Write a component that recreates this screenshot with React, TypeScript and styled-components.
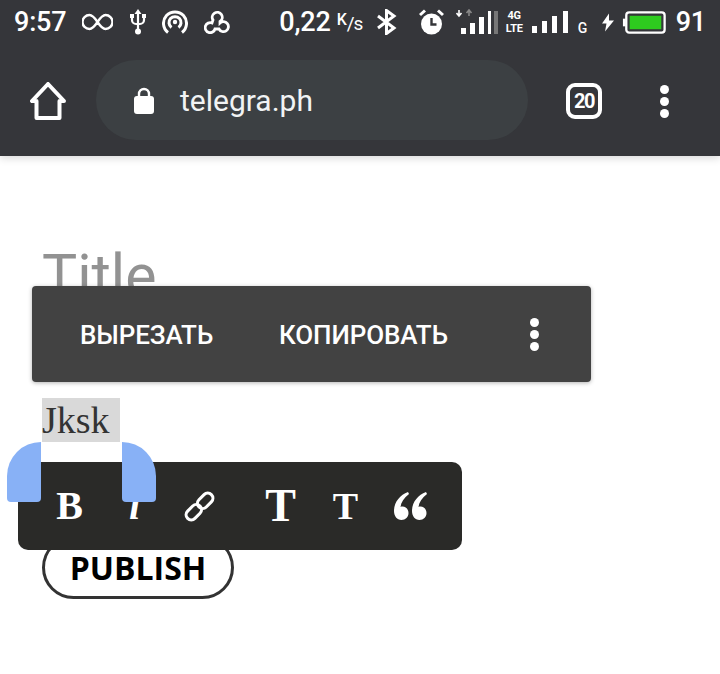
import { FC } from "react";
import styled, { createGlobalStyle } from "styled-components";

const GlobalStyle = createGlobalStyle`
  html, body {
    margin: 0;
    padding: 0;
    background: #fff;
  }
`;

const Page = styled.div`
  position: relative;
  width: 720px;
  height: 674px;
  overflow: hidden;
  background: #fff;
`;

const Header = styled.header`
  background: #35363a;
  box-shadow: 0 2px 8px rgba(0, 0, 0, 0.16);
  position: relative;
`;

const StatusBar = styled.div`
  height: 48px;
  box-sizing: border-box;
  padding: 0 0 4px 14px;
  display: flex;
  align-items: center;
  color: #fff;
  font-family: Roboto, sans-serif;
`;

const StatusText = styled.span<{ $left?: number }>`
  font-size: 27px;
  font-weight: 500;
  line-height: 44px;
  margin-left: ${(p) => p.$left ?? 0}px;
  letter-spacing: -0.2px;
`;

const Speed = styled.span`
  font-size: 16px;
  font-weight: 500;
  margin-left: 6px;
  width: 25px;
  position: relative;
  top: -4px;
  white-space: nowrap;
`;

const SpeedUnit = styled.span`
  font-size: 19px;
  font-weight: 400;
  position: relative;
  top: 5px;
  letter-spacing: -1px;
`;

const StatusIcon = styled.svg<{ $left?: number }>`
  display: block;
  flex: none;
  margin-left: ${(p) => p.$left ?? 0}px;
`;

const NetLabel = styled.span`
  display: flex;
  flex-direction: column;
  align-items: center;
  margin-left: 9px;
  width: 15px;
  font-size: 11px;
  line-height: 13px;
  font-weight: 700;
  letter-spacing: -0.3px;
`;

const SmallG = styled.span`
  font-size: 14px;
  font-weight: 500;
  width: 9px;
  margin-left: 10px;
  position: relative;
  top: 6px;
`;

const Toolbar = styled.div`
  height: 108px;
  display: flex;
  align-items: flex-start;
  padding-left: 30px;
`;

const HomeSlot = styled.div`
  margin-top: 34px;
`;

const AddressPill = styled.div`
  width: 432px;
  height: 80px;
  margin: 12px 0 0 30px;
  padding-left: 38px;
  box-sizing: border-box;
  border-radius: 40px;
  background: #3c4043;
  display: flex;
  align-items: center;
  gap: 26px;
`;

const Url = styled.span`
  font-family: Roboto, sans-serif;
  font-size: 30px;
  color: #f1f3f4;
`;

const TabCount = styled.div`
  width: 36px;
  height: 36px;
  margin: 35px 0 0 38px;
  box-sizing: border-box;
  border: 4px solid #fff;
  border-radius: 9px;
  display: flex;
  align-items: center;
  justify-content: center;
  color: #fff;
  font-family: Roboto, sans-serif;
  font-size: 20px;
  font-weight: 700;
  letter-spacing: -1.500px;
`;

const MenuDots = styled.div<{ $size: number; $gap: number; $left?: number; $top?: number }>`
  display: flex;
  flex-direction: column;
  gap: ${(p) => p.$gap}px;
  margin-left: ${(p) => p.$left ?? 0}px;
  margin-top: ${(p) => p.$top ?? 0}px;
  i {
    display: block;
    width: ${(p) => p.$size}px;
    height: ${(p) => p.$size}px;
    border-radius: 50%;
    background: #fff;
  }
`;

const Content = styled.main`
  padding: 84px 0 0 42px;
`;

const Title = styled.h1`
  margin: 0;
  height: 158px;
  font-family: Roboto, sans-serif;
  font-weight: 400;
  font-size: 59px;
  line-height: 72px;
  color: #929292;
`;

const Paragraph = styled.p`
  margin: 0;
  height: 138px;
`;

const Selected = styled.span`
  display: inline-block;
  height: 44px;
  width: 78px;
  background: #d9d9d9;
  color: #333;
  font-family: "Liberation Serif", serif;
  font-size: 38px;
  line-height: 44px;
`;

const PublishButton = styled.button`
  display: block;
  width: 192px;
  height: 63px;
  padding: 0;
  box-sizing: border-box;
  background: #fff;
  border: 3px solid #333;
  border-radius: 32px;
  color: #000;
  font-family: "Open Sans", sans-serif;
  font-size: 32px;
  font-weight: 700;
  line-height: 56px;
`;

const ContextMenu = styled.div`
  position: absolute;
  left: 32px;
  top: 286px;
  width: 559px;
  height: 96px;
  box-sizing: border-box;
  padding-left: 48px;
  display: flex;
  align-items: center;
  background: #424242;
  border-radius: 4px;
  box-shadow: 0 1px 4px rgba(0, 0, 0, 0.3);
`;

const MenuItem = styled.span<{ $width: number }>`
  width: ${(p) => p.$width}px;
  padding-top: 2px;
  color: #fff;
  font-family: Roboto, sans-serif;
  font-size: 26px;
  font-weight: 500;
  letter-spacing: -0.1px;
  white-space: nowrap;
`;

const FormatBar = styled.div`
  position: absolute;
  left: 18px;
  top: 462px;
  width: 444px;
  height: 88px;
  box-sizing: border-box;
  padding-left: 19px;
  display: flex;
  align-items: center;
  background: #2a2a28;
  border-radius: 10px;
`;

const FormatButton = styled.span<{ $size: number; $left?: number; $italic?: boolean }>`
  width: 65px;
  height: 88px;
  margin-left: ${(p) => p.$left ?? 0}px;
  flex: none;
  display: flex;
  align-items: center;
  justify-content: center;
  color: #fff;
  font-family: "Liberation Serif", serif;
  font-weight: 700;
  font-style: ${(p) => (p.$italic ? "italic" : "normal")};
  font-size: ${(p) => p.$size}px;
  line-height: 88px;
`;

const Handle = styled.div<{ $side: "left" | "right" }>`
  position: absolute;
  top: 442px;
  left: ${(p) => (p.$side === "left" ? 7 : 122)}px;
  width: 34px;
  height: 60px;
  background: #88b1f6;
  border-radius: ${(p) => (p.$side === "left" ? "34px 0 4px 4px" : "0 34px 4px 4px")};
`;

const StatusIcons: FC = () => (
  <StatusBar>
    <StatusText>9:57</StatusText>
    <StatusIcon $left={16} width="31" height="18" viewBox="0 0 31 18" fill="none" stroke="#fff" strokeWidth="2.400">
      <path d="M15.500 9C12.500 4.500 10.500 2 7.500 2a7 7 0 0 0 0 14c3 0 5-2.500 8-7s5-7 8-7a7 7 0 0 1 0 14c-3 0-5-2.500-8-7z" />
    </StatusIcon>
    <StatusIcon $left={17} width="16" height="26" viewBox="0 0 16 26" fill="none" stroke="#fff" strokeWidth="2.200">
      <path d="M2 7v4a4 4 0 0 0 4 4h4a4 4 0 0 0 4-4V7" />
      <path d="M8 4v18" />
      <path d="M8 0l3.500 5h-7z" fill="#fff" stroke="none" />
      <circle cx="8" cy="22.500" r="3" fill="#fff" stroke="none" />
      <rect x="0" y="5" width="4" height="4" fill="#fff" stroke="none" />
      <rect x="12" y="5" width="4" height="4" fill="#fff" stroke="none" />
    </StatusIcon>
    <StatusIcon $left={16} width="26" height="26" viewBox="0 0 26 26" fill="none" stroke="#fff" strokeWidth="3">
      <path d="M6 23.500a11.500 11.500 0 1 1 14 0" />
      <path d="M9.500 18.500a6 6 0 1 1 7 0" />
      <circle cx="13" cy="13" r="2.200" fill="#fff" stroke="none" />
    </StatusIcon>
    <StatusIcon $left={16} width="26" height="24" viewBox="0 0 26 24" fill="none" stroke="#fff" strokeWidth="2.800">
      <path d="M16 11.500A5 5 0 1 0 9 10L8 13A5 5 0 1 0 11 19H15A5 5 0 1 0 16 13Z" />
    </StatusIcon>
    <StatusText $left={49}>0,22</StatusText>
    <Speed>
      K<SpeedUnit>/s</SpeedUnit>
    </Speed>
    <StatusIcon $left={14} width="21" height="26" viewBox="0 0 21 26" fill="none" stroke="#fff" strokeWidth="3">
      <path d="M2 7l16 12-7.500 5.500V1.500L18 7 2 19" />
    </StatusIcon>
    <StatusIcon $left={22} width="25" height="26" viewBox="0 0 25 26">
      <path d="M1 6l5-4.500M24 6l-5-4.500" stroke="#fff" strokeWidth="3" />
      <circle cx="12.500" cy="15" r="10.500" fill="#fff" />
      <path d="M12.500 9v6.500h5" stroke="#35363a" strokeWidth="2.400" fill="none" />
    </StatusIcon>
    <StatusIcon $left={12} width="42" height="26" viewBox="0 0 42 26">
      <path d="M3 1v5M0.500 4L3 7l2.500-3" stroke="#fff" strokeWidth="1.600" fill="none" />
      <path d="M13 7V2M10.500 4L13 1l2.500 3" stroke="#888" strokeWidth="1.600" fill="none" />
      <rect x="5" y="19" width="5" height="6" fill="#fff" />
      <rect x="14" y="14" width="5" height="11" fill="#fff" />
      <rect x="23" y="8" width="5" height="17" fill="#fff" />
      <rect x="32" y="2" width="3" height="23" fill="#fff" />
      <rect x="38" y="2" width="4" height="23" fill="#777" />
    </StatusIcon>
    <NetLabel>
      <span>4G</span>
      <span>LTE</span>
    </NetLabel>
    <StatusIcon $left={10} width="36" height="22" viewBox="0 0 36 22" fill="#fff">
      <rect x="0" y="15" width="5" height="7" />
      <rect x="10" y="10" width="5" height="12" />
      <rect x="20" y="5" width="5" height="17" />
      <rect x="31" y="0" width="5" height="22" />
    </StatusIcon>
    <SmallG>G</SmallG>
    <StatusIcon $left={15} width="12" height="19" viewBox="0 0 12 18" fill="#fff">
      <path d="M7 0L0 10h4.500L3 18l9-11H7z" />
    </StatusIcon>
    <StatusIcon $left={8} width="45" height="23" viewBox="0 0 45 24">
      <rect x="0" y="8" width="3" height="8" fill="#fff" />
      <rect x="3.500" y="1.500" width="40" height="21" rx="3" fill="none" stroke="#fff" strokeWidth="2.400" />
      <rect x="7" y="5" width="33" height="14" fill="#2ecb1f" />
    </StatusIcon>
    <StatusText $left={9}>91</StatusText>
  </StatusBar>
);

const App: FC = () => (
  <Page>
    <GlobalStyle />
    <Header>
      <StatusIcons />
      <Toolbar>
        <HomeSlot>
          <svg width="36" height="38" viewBox="0 0 36 38" fill="none" stroke="#fff" strokeWidth="4" strokeLinejoin="round" style={{ display: "block" }}>
            <path d="M18 2L2 19h4.500v17h23V19H34z" />
          </svg>
        </HomeSlot>
        <AddressPill>
          <svg width="20" height="27" viewBox="0 0 20 27" style={{ display: "block", flex: "none" }}>
            <path d="M5 10V7a5 5 0 0 1 10 0v3" fill="none" stroke="#fff" strokeWidth="2.400" />
            <rect x="0" y="9" width="20" height="18" rx="3" fill="#fff" />
          </svg>
          <Url>telegra.ph</Url>
        </AddressPill>
        <TabCount>20</TabCount>
        <MenuDots $size={9} $gap={3} $left={58} $top={37}>
          <i />
          <i />
          <i />
        </MenuDots>
      </Toolbar>
    </Header>
    <Content>
      <Title>Title</Title>
      <Paragraph>
        <Selected>Jksk</Selected>
      </Paragraph>
      <PublishButton>PUBLISH</PublishButton>
    </Content>
    <ContextMenu>
      <MenuItem $width={199}>ВЫРЕЗАТЬ</MenuItem>
      <MenuItem $width={251}>КОПИРОВАТЬ</MenuItem>
      <MenuDots $size={9} $gap={3}>
        <i />
        <i />
        <i />
      </MenuDots>
    </ContextMenu>
    <FormatBar>
      <FormatButton $size={40}>B</FormatButton>
      <FormatButton $size={40} $italic>i</FormatButton>
      <FormatButton $size={30}>
        <svg width="33" height="33" viewBox="0 0 32 32" fill="none" stroke="#fff" strokeWidth="3">
          <rect x="-8.500" y="-5" width="17" height="10" rx="5" transform="translate(10.500 21.500) rotate(-45)" />
          <rect x="-8.500" y="-5" width="17" height="10" rx="5" transform="translate(21.500 10.500) rotate(-45)" />
        </svg>
      </FormatButton>
      <FormatButton $size={46} $left={16}>T</FormatButton>
      <FormatButton $size={38}>T</FormatButton>
      <FormatButton $size={30}>
        <svg width="34" height="30" viewBox="0 0 34 30" fill="#fff">
          <path d="M14 1C6 4 0 11 0 20c0 5 3 9 7.500 9 4 0 7-3 7-7 0-3.500-2.500-6.500-6-6.500-.8 0-1.500.2-2 .4C7 11.500 10 7 15 3z" />
          <path d="M32 1C24 4 18 11 18 20c0 5 3 9 7.500 9 4 0 7-3 7-7 0-3.500-2.500-6.500-6-6.500-.8 0-1.500.2-2 .4C25 11.500 28 7 33 3z" />
        </svg>
      </FormatButton>
    </FormatBar>
    <Handle $side="left" />
    <Handle $side="right" />
  </Page>
);

export default App;
